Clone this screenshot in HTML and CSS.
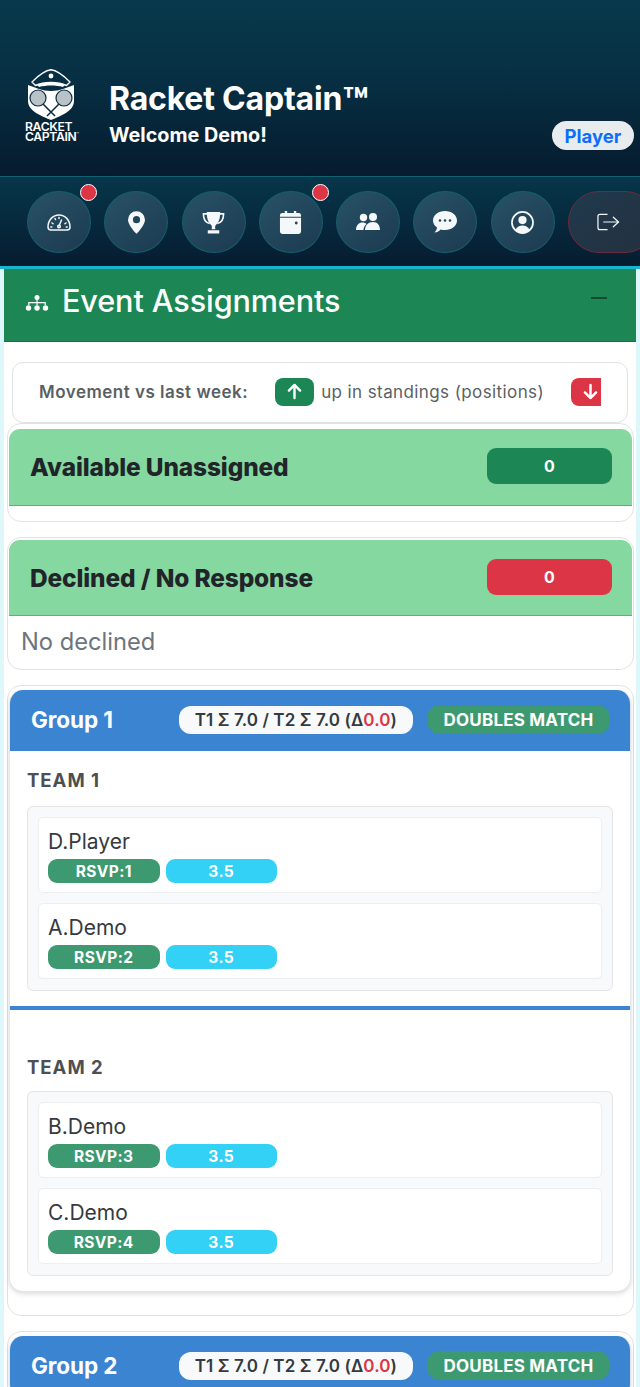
FILE: index.html
```html
<!DOCTYPE html>
<html lang="en">
<head>
  <meta charset="UTF-8" />
  <meta name="viewport" content="width=device-width, initial-scale=1.0" />
  <title>Racket Captain - Event Assignments</title>
  <link rel="stylesheet" href="styles.css">
</head>
<body>
  <header class="top">
    <div class="brand">
      <div class="logo">
        <svg class="logo-mark" viewBox="0 0 46 51" width="46" height="51">
          <path d="M4 13C10 7 16 1.500 23 .800 30 1.500 36 7 42 13l-3.500 3.500C30 12.500 16 12.500 7.500 16.500z" fill="none" stroke="#fff" stroke-width="1.400" stroke-linejoin="round"/>
          <circle cx="23" cy="7" r="2.400" fill="#fff"/>
          <path d="M9 15.500c8-2.500 20-2.500 28 0l-2 2.500c-7-2-17-2-24 0z" fill="#fff"/>
          <path d="M0 16l11 4c7 2.500 17 2.500 24 0l11-4v16c0 10-13 15-23 19C13 47 0 42 0 32z" fill="#fff"/>
          <circle cx="10" cy="29" r="8" fill="#b9c2c7" stroke="#0b2c40" stroke-width="1.200"/>
          <circle cx="36" cy="29" r="8" fill="#b9c2c7" stroke="#0b2c40" stroke-width="1.200"/>
          <path d="M15 35l12 12M31 35L19 47" stroke="#0b2c40" stroke-width="1.500"/>
        </svg>
        <div class="logo-text">RACKET<br>CAPTAIN<sup>™</sup></div>
      </div>
      <div class="brand-text">
        <h1>Racket Captain<span class="tm">™</span></h1>
        <p>Welcome Demo!</p>
      </div>
    </div>
    <span class="role">Player</span>
  </header>

  <nav class="icon-nav">
    <button class="nav-btn">
      <svg viewBox="0 0 24 17" width="24" height="17" fill="none" stroke="#f2f6f8" stroke-width="1.500" stroke-linecap="round"><path d="M4 16h16c1.600 0 3-1 3-3C23 6 18 1 12 1S1 6 1 13c0 2 1.400 3 3 3z"/><path d="M12 12l2.500-6M5 9l1 .7M3.800 13h1M19 9l-1 .7M20.200 13h-1M12 3.500v1M8 4.500l.5 1"/><circle cx="12" cy="12.500" r="1.300"/></svg>
      <span class="dot"></span>
    </button>
    <button class="nav-btn">
      <svg viewBox="0 0 18 24" width="17" height="23"><path fill-rule="evenodd" fill="#f5f8fa" d="M9 0a9 9 0 0 1 9 9c0 4.500-5.500 11.500-9 15C5.500 20.500 0 13.500 0 9a9 9 0 0 1 9-9zm0 5.200a3.800 3.800 0 1 0 0 7.600 3.800 3.800 0 0 0 0-7.600z"/></svg>
    </button>
    <button class="nav-btn">
      <svg viewBox="0 0 24 24" width="23" height="23"><path fill="none" stroke="#f5f8fa" stroke-width="1.700" d="M6 3H1.500c0 6 2 9 6.500 10M18 3h4.500c0 6-2 9-6.500 10"/><path fill="#f5f8fa" d="M5 1h14c0 7-1.500 11-4.500 13.500-1 .8-1 2.500-.5 4.500H10c.5-2 .5-3.700-.5-4.500C6.500 12 5 8 5 1zM6 20h12v3.500H6z"/></svg>
    </button>
    <button class="nav-btn">
      <svg viewBox="0 0 24 24" width="23" height="23"><path fill="#f5f8fa" d="M6 0h2.500v2h7V0H18v2h2.500A2.500 2.500 0 0 1 23 4.500v1.500H1V4.500A2.500 2.500 0 0 1 3.500 2H6zM1 7h22v14.500a2.500 2.500 0 0 1-2.500 2.500h-17A2.500 2.500 0 0 1 1 21.500z"/><circle cx="18" cy="12.500" r="1.500" fill="#24475a"/></svg>
      <span class="dot"></span>
    </button>
    <button class="nav-btn">
      <svg viewBox="0 0 24 18" width="24" height="18" fill="#f5f8fa"><circle cx="7.500" cy="4.500" r="3.700"/><circle cx="17" cy="4" r="4"/><path d="M0 17c0-5 3-7.500 6.500-7.500 1.500 0 3 .5 4 1.500C8.500 12.500 7.500 14.500 7.500 17zM9 17c0-5 3.500-8 8-8s7 3 7 8z"/></svg>
    </button>
    <button class="nav-btn">
      <svg viewBox="0 0 24 22" width="24" height="22"><path fill="#f5f8fa" d="M12 0c6.600 0 12 4 12 9.500S18.600 19 12 19c-1.500 0-3-.2-4.300-.6C6 20 3.500 21.500 1.500 21.500c1.500-1.500 2.500-3.500 2.500-5C1.500 14.800 0 12.300 0 9.500 0 4 5.400 0 12 0z"/><circle cx="7" cy="9.500" r="1.300" fill="#24475a"/><circle cx="12" cy="9.500" r="1.300" fill="#24475a"/><circle cx="17" cy="9.500" r="1.300" fill="#24475a"/></svg>
    </button>
    <button class="nav-btn">
      <svg viewBox="0 0 24 24" width="23" height="23"><circle cx="12" cy="12" r="11" fill="none" stroke="#f5f8fa" stroke-width="1.800"/><circle cx="12" cy="9.500" r="4.300" fill="#f5f8fa"/><path fill="#f5f8fa" d="M4.500 19.500C6 16.500 9 15 12 15s6 1.500 7.500 4.500C17.500 21.800 15 23 12 23s-5.500-1.200-7.500-3.500z"/></svg>
    </button>
    <button class="nav-btn nav-exit">
      <svg viewBox="0 0 24 18" width="23" height="18" fill="none" stroke="#f2f6f8" stroke-width="1.300" stroke-linejoin="round"><path d="M11 1H3a2 2 0 0 0-2 2v12a2 2 0 0 0 2 2h8"/><path d="M7 9h15M17 4l5.500 5-5.500 5" stroke-linecap="round"/></svg>
    </button>
  </nav>

  <main class="page">
    <section class="panel">
      <div class="panel-head">
        <svg class="panel-icon" viewBox="0 0 24 16" width="24" height="16" fill="#fff"><rect x="9.500" y="0" width="5" height="5" rx="2.500"/><path d="M11.400 4h1.200v3h8.200v3h-1.200V8.200h-7V10h-1.200V8.200h-7V10H3.200V7h8.200z"/><circle cx="3.500" cy="13" r="2.700"/><circle cx="12" cy="13" r="2.700"/><circle cx="20.500" cy="13" r="2.700"/></svg>
        <h2>Event Assignments</h2>
        <span class="collapse"></span>
      </div>

      <div class="legend">
        <div class="legend-track">
          <strong>Movement vs last week:</strong>
          <span class="chip chip-up">
            <svg viewBox="0 0 16 18" width="15" height="17" fill="none" stroke="#fff" stroke-width="2.600" stroke-linecap="round" stroke-linejoin="round"><path d="M8 16V2M2 8l6-6 6 6"/></svg>
          </span>
          <span class="legend-note">up in standings (positions)</span>
          <span class="chip chip-down">
            <svg viewBox="0 0 16 18" width="15" height="17" fill="none" stroke="#fff" stroke-width="2.600" stroke-linecap="round" stroke-linejoin="round"><path d="M8 2v14M2 10l6 6 6-6"/></svg>
          </span>
        </div>
      </div>

      <div class="card card-first">
        <div class="card-head">
          <h3>Available Unassigned</h3>
          <span class="count count-green">0</span>
        </div>
      </div>

      <div class="card card-second">
        <div class="card-head card-head-short">
          <h3>Declined / No Response</h3>
          <span class="count count-red">0</span>
        </div>
        <p class="empty">No declined</p>
      </div>

      <div class="card card-group">
        <div class="group">
          <div class="group-head">
            <h4>Group 1</h4>
            <span class="sum">T1 Σ 7.0 / T2 Σ 7.0 (Δ<em>0.0</em>)</span>
            <span class="match">DOUBLES MATCH</span>
          </div>
          <div class="team">
            <h5>TEAM 1</h5>
            <div class="roster">
              <div class="player">
                <div class="name">D.Player</div>
                <div class="tags"><span class="tag tag-rsvp">RSVP:1</span><span class="tag tag-rating">3.5</span></div>
              </div>
              <div class="player">
                <div class="name">A.Demo</div>
                <div class="tags"><span class="tag tag-rsvp">RSVP:2</span><span class="tag tag-rating">3.5</span></div>
              </div>
            </div>
          </div>
          <div class="team team-second">
            <h5>TEAM 2</h5>
            <div class="roster">
              <div class="player">
                <div class="name">B.Demo</div>
                <div class="tags"><span class="tag tag-rsvp">RSVP:3</span><span class="tag tag-rating">3.5</span></div>
              </div>
              <div class="player">
                <div class="name">C.Demo</div>
                <div class="tags"><span class="tag tag-rsvp">RSVP:4</span><span class="tag tag-rating">3.5</span></div>
              </div>
            </div>
          </div>
        </div>
      </div>

      <div class="card card-group">
        <div class="group">
          <div class="group-head">
            <h4>Group 2</h4>
            <span class="sum">T1 Σ 7.0 / T2 Σ 7.0 (Δ<em>0.0</em>)</span>
            <span class="match">DOUBLES MATCH</span>
          </div>
        </div>
      </div>
    </section>
  </main>
</body>
</html>
```

FILE: styles.css
```css
* { margin: 0; padding: 0; box-sizing: border-box; }
html, body {
  width: 100%; height: 1387px; overflow: hidden;
  font-family: Inter, "Noto Sans", sans-serif;
  background: #fff; color: #333;
}

/* top bar */
.top {
  height: 176px;
  padding: 0 6px 26px 27px;
  display: flex;
  align-items: flex-end;
  justify-content: space-between;
  color: #fff;
  background: linear-gradient(to bottom, #07394c 0%, #072f43 45%, #061b2e 100%);
}
.brand { display: flex; align-items: flex-end; gap: 29px; }
.logo { width: 53px; margin-bottom: 8px; display: flex; flex-direction: column; align-items: center; }
.logo-mark { display: block; margin-right: 6px; }
.logo-text {
  width: 55px;
  margin-left: -2px;
  margin-top: 2px;
  font-size: 12.200px; line-height: 10px; font-weight: 600;
  letter-spacing: -0.35px;
}
.logo-text sup { font-size: 4px; vertical-align: 5px; line-height: 0; }
h1 { font-size: 32px; line-height: 40px; font-weight: 700; letter-spacing: -0.2px; margin-bottom: 1px; }
.tm { font-size: 1.300em; line-height: 0; vertical-align: -7px; letter-spacing: 0; }
.brand-text p { font-size: 19.800px; line-height: 30px; font-weight: 700; }
.role {
  width: 82px; height: 29px;
  display: flex; align-items: center; justify-content: center;
  background: #e9ecef;
  color: #0d6efd;
  border-radius: 15px;
  font-size: 18.500px; font-weight: 700;
}

/* round icon row */
.icon-nav {
  height: 93px;
  padding: 14px 0 0 27px;
  display: flex;
  gap: 13.300px;
  overflow: hidden;
  border-top: 1px solid #11606f;
  border-bottom: 3px solid #17b4cc;
  background: linear-gradient(to bottom, #07364a 0%, #061c30 100%);
}
.nav-btn {
  position: relative;
  flex: 0 0 64px;
  height: 62px;
  display: flex; align-items: center; justify-content: center;
  background: linear-gradient(145deg, #285266, #1c3a50);
  border: 1px solid #14606f;
  border-radius: 50%;
}
.nav-exit {
  flex-basis: 88px;
  border-radius: 32px;
  border-color: #6b2c3e;
  background: linear-gradient(145deg, #1f3a4d, #24303f);
  justify-content: flex-start;
  padding-left: 28px;
}
.dot {
  position: absolute;
  top: -8px; right: -7px;
  width: 17px; height: 17px;
  border-radius: 50%;
  background: #dc3545;
  border: 1px solid #fff;
}

/* main panel */
.page { padding: 0 4px; background: #def7fb; height: 1118px; overflow: hidden; }
.panel { background: #fff; min-height: 100%; padding-bottom: 20px; }
.panel-head {
  height: 73px;
  padding: 0 29px 8px 21px;
  display: flex;
  align-items: center;
  gap: 13px;
  background: #1c8754;
  border-bottom: 1px solid #177048;
  color: #fff;
}
.panel-icon { flex: none; margin-top: 4px; }
h2 { flex: 1; font-size: 30.600px; line-height: 36px; font-weight: 500; letter-spacing: -0.1px; }
.collapse { width: 16px; height: 2px; background: #164a33; margin-bottom: 6px; }

.legend {
  height: 61px;
  margin: 20px 8px 0;
  padding: 0 26px 2px;
  display: flex;
  align-items: center;
  background: #fff;
  border: 1px solid #dfe3e8;
  border-radius: 11px;
}
.legend-track { width: 100%; display: flex; align-items: center; overflow: hidden; white-space: nowrap; color: #5a5f64; font-size: 17px; letter-spacing: 0.4px; }
.legend-track strong { font-weight: 600; margin-right: 27px; letter-spacing: 0.5px; }
.chip {
  flex: none;
  width: 39px; height: 28px;
  display: flex; align-items: center; justify-content: center;
  border-radius: 8px;
}
.chip-up { background: #1c8754; margin-right: 7px; }
.legend-note { margin-right: 27px; }
.chip-down { background: #dc3545; }

/* cards */
.card {
  background: #fff;
  border: 1px solid #e0e3e6;
  border-radius: 14px;
}
.card-first { margin: 0 2px 0 3px; padding: 5px 1px 0; height: 99px; }
.card-second { margin: 15px 2px 0 3px; padding: 2px 1px 0; height: 133px; }
.card-head {
  height: 77px;
  padding: 0 20px 3px 21px;
  display: flex;
  align-items: center;
  justify-content: space-between;
  background: #85d8a0;
  border-bottom: 1px solid #5fae7e;
  border-radius: 11px 11px 0 0;
}
.card-head-short { height: 76px; padding-bottom: 2px; }
h3 { padding-top: 2px; font-size: 24.400px; font-weight: 800; line-height: 30px; color: #212529; letter-spacing: -0.1px; }
.count {
  width: 125px; height: 36px;
  display: flex; align-items: center; justify-content: center;
  border-radius: 9px;
  color: #fff;
  font-size: 16px; font-weight: 700;
}
.count-green { background: #1c8754; }
.count-red { background: #dc3545; }
.empty { padding: 11px 12px; font-size: 23.700px; line-height: 30px; color: #6c757d; }

/* group cards */
.card-group { margin: 15px 2px 0 3px; padding: 4px 2px 23px 1px; }
.group {
  border: 1px solid #e2e5e9;
  border-top: 0;
  border-radius: 14px;
  background: #fff;
  box-shadow: 0 2px 5px rgba(0, 0, 0, 0.14);
  overflow: hidden;
}
.group-head {
  height: 61px;
  padding: 0 20px 2px 21px;
  display: flex;
  align-items: center;
  background: #3a84d2;
  color: #fff;
}
h4 { flex: 1; font-size: 22.500px; line-height: 28px; font-weight: 700; letter-spacing: -0.1px; }
.sum {
  height: 28px;
  padding: 0 16px;
  display: flex; align-items: center;
  margin-right: 14px;
  background: #f8f9fa;
  color: #343a40;
  border-radius: 12px;
  font-size: 17px; font-weight: 600;
  letter-spacing: 0.1px;
  white-space: nowrap;
}
.sum em { font-style: normal; color: #dc3545; }
.match {
  height: 29px;
  width: 183px;
  display: flex; align-items: center; justify-content: center;
  background: #3d9970;
  border-radius: 13px;
  font-size: 17px; font-weight: 700;
  letter-spacing: 0.2px;
}

.team { padding: 18px 17px 15px; }
.team-second { padding: 46px 17px 15px; border-top: 4px solid #3a84d2; }
h5 { font-size: 18.500px; line-height: 22px; font-weight: 700; color: #4d4f52; letter-spacing: 1px; margin-bottom: 15px; }
.team-second h5 { margin-bottom: 13px; }
.roster {
  padding: 10px 10px 11px;
  display: flex;
  flex-direction: column;
  gap: 10px;
  background: #f8f9fa;
  border: 1px solid #e3e5e8;
  border-radius: 6px;
}
.player {
  height: 76px;
  padding: 10px 10px 0 9px;
  background: #fff;
  border: 1px solid #eceef0;
  border-radius: 5px;
}
.name { font-size: 21px; line-height: 28px; color: #343a40; }
.tags { display: flex; gap: 6px; margin-top: 3px; }
.tag {
  width: 111.500px; height: 24px;
  display: flex; align-items: center; justify-content: center;
  border-radius: 9px;
  color: #fff;
  font-size: 15.500px; font-weight: 700;
  letter-spacing: 0.4px;
}
.tag-rsvp { background: #3d9970; }
.tag-rating { background: #32d1f5; }
```
